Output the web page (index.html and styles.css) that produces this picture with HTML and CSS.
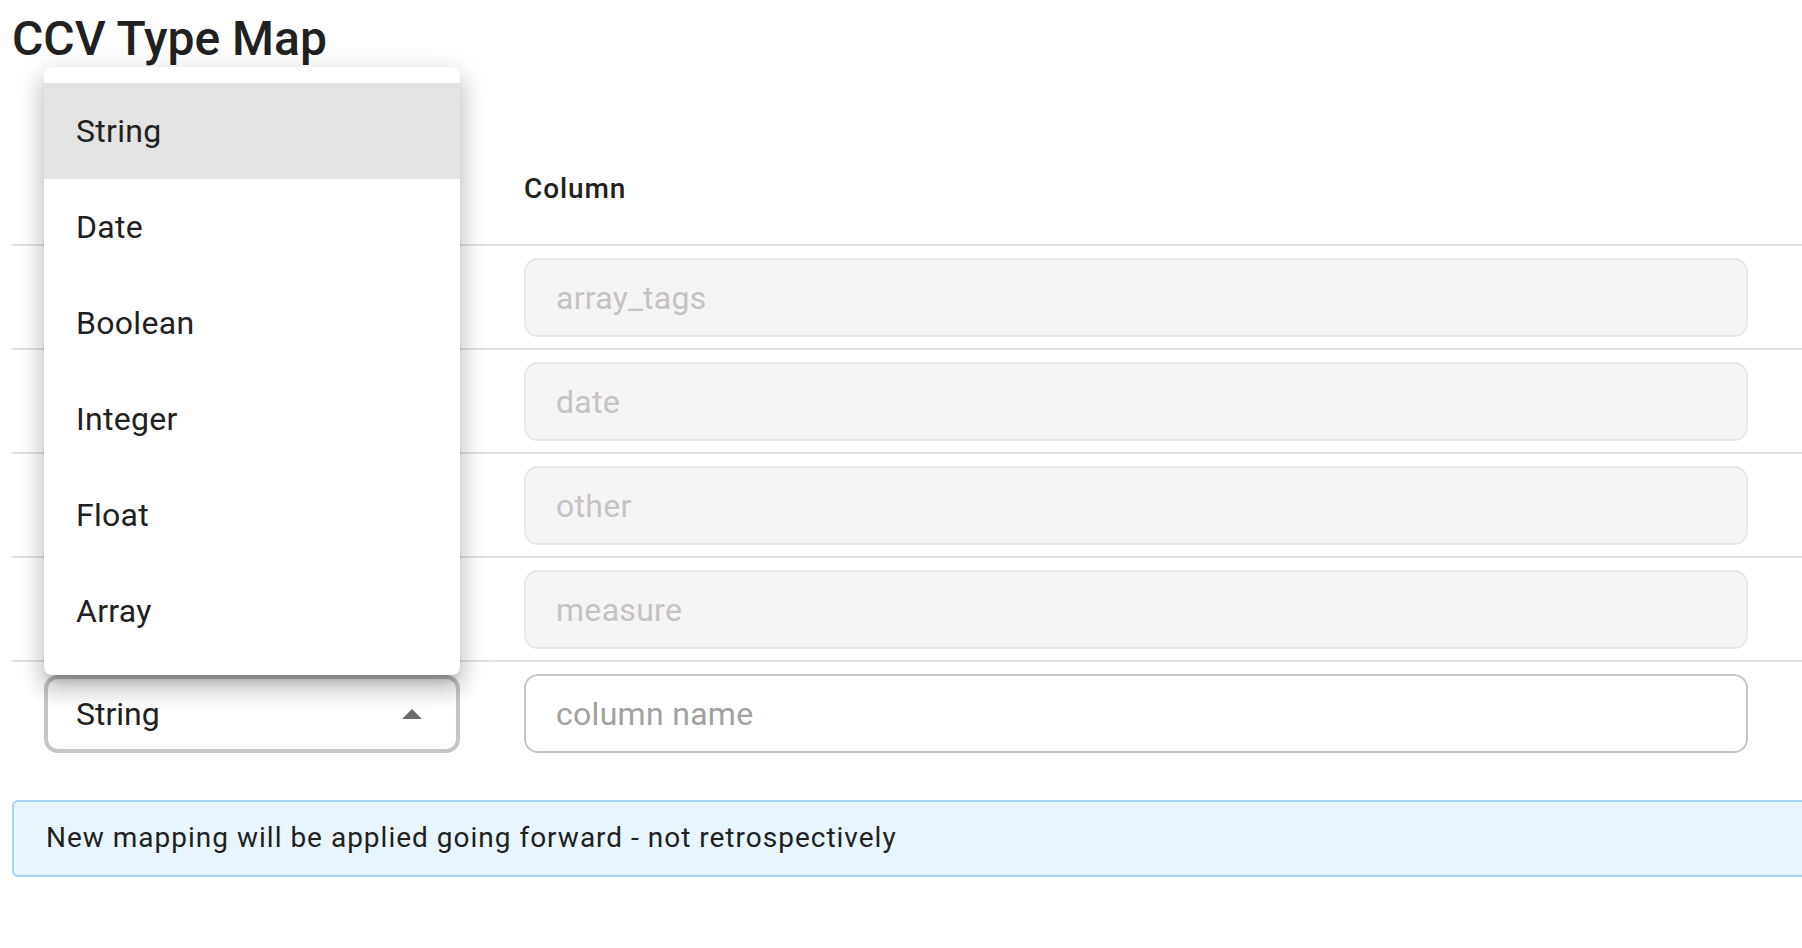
FILE: index.html
```html
<!DOCTYPE html>
<html lang="en">
<head>
<meta charset="utf-8">
<title>CCV Type Map</title>
<link rel="stylesheet" href="styles.css">
</head>
<body>
<div class="page">
  <h1 class="title">CCV Type Map</h1>
  <table class="map-table">
    <colgroup>
      <col class="col-type">
      <col class="col-column">
      <col class="col-actions">
    </colgroup>
    <thead>
      <tr>
        <th></th>
        <th>Column</th>
        <th></th>
      </tr>
    </thead>
    <tbody>
      <tr>
        <td><div class="select select-disabled"></div></td>
        <td><input class="field" type="text" placeholder="array_tags" disabled></td>
        <td></td>
      </tr>
      <tr>
        <td><div class="select select-disabled"></div></td>
        <td><input class="field" type="text" placeholder="date" disabled></td>
        <td></td>
      </tr>
      <tr>
        <td><div class="select select-disabled"></div></td>
        <td><input class="field" type="text" placeholder="other" disabled></td>
        <td></td>
      </tr>
      <tr>
        <td><div class="select select-disabled"></div></td>
        <td><input class="field" type="text" placeholder="measure" disabled></td>
        <td></td>
      </tr>
      <tr class="last-row">
        <td>
          <div class="select select-open">
            <span>String</span>
            <svg class="arrow" width="20" height="10" viewBox="0 0 20 10" aria-hidden="true"><polygon points="0,10 10,0 20,10" fill="#6b6b6b"/></svg>
          </div>
        </td>
        <td><input class="field field-active" type="text" placeholder="column name"></td>
        <td></td>
      </tr>
    </tbody>
  </table>
  <div class="alert">New mapping will be applied going forward - not retrospectively</div>

  <ul class="menu">
    <li class="menu-item selected">String</li>
    <li class="menu-item">Date</li>
    <li class="menu-item">Boolean</li>
    <li class="menu-item">Integer</li>
    <li class="menu-item">Float</li>
    <li class="menu-item">Array</li>
  </ul>
</div>
</body>
</html>
```

FILE: styles.css
```css
html, body {
  margin: 0;
  padding: 0;
  background: #ffffff;
  overflow: hidden;
}

body {
  font-family: Roboto, "Liberation Sans", Arial, sans-serif;
  color: #212121;
}

.page {
  position: relative;
  width: 1880px;
  padding: 7px 12px 0;
  box-sizing: border-box;
}

.title {
  margin: 0;
  font-size: 48px;
  line-height: 64px;
  font-weight: 500;
  color: #212121;
}

.map-table {
  margin-top: 62px;
  width: 100%;
  border-collapse: collapse;
  table-layout: fixed;
}

.col-type { width: 480px; }
.col-column { width: 1288px; }

.map-table th {
  padding: 32px 32px 31px;
  font-size: 28px;
  line-height: 48px;
  font-weight: 500;
  letter-spacing: 0.9px;
  text-align: left;
  color: #212121;
  border-bottom: 2px solid #e2e2e2;
}

.map-table td {
  padding: 12px 32px 11px;
  border-bottom: 2px solid #e2e2e2;
  vertical-align: middle;
}

.map-table tr.last-row td {
  border-bottom: none;
}

.field {
  display: block;
  width: 100%;
  height: 79px;
  box-sizing: border-box;
  margin: 0;
  padding: 0 28px 0 30px;
  font-family: Roboto, "Liberation Sans", Arial, sans-serif;
  font-size: 32px;
  letter-spacing: 0.3px;
  color: #212121;
  background: #f5f5f5;
  border: 2px solid #e8e8e8;
  border-radius: 14px;
  outline: none;
}

.field::placeholder {
  color: #c6c2c2;
  opacity: 1;
}

.field-active {
  background: #ffffff;
  border-color: #cbc7c7;
}

.field-active::placeholder {
  color: #a3a0a0;
}

.select {
  display: flex;
  align-items: center;
  justify-content: space-between;
  height: 78px;
  box-sizing: border-box;
  padding: 0 34px 0 28px;
  font-size: 32px;
  color: #212121;
  border-radius: 14px;
}

.select-disabled {
  background: #f5f5f5;
  border: 2px solid #e8e8e8;
}

.select-open {
  background: #ffffff;
  border: 4px solid #c9c5c5;
}

.arrow {
  display: block;
  flex: none;
}

.alert {
  margin-top: 36px;
  padding: 16px 32px 17px;
  font-size: 28px;
  line-height: 40px;
  letter-spacing: 1px;
  color: #212121;
  background: #e8f5fd;
  border: 2px solid #a4d4f7;
  border-radius: 6px;
}

.menu {
  position: absolute;
  top: 67px;
  left: 44px;
  width: 416px;
  margin: 0;
  padding: 16px 0;
  list-style: none;
  background: #ffffff;
  border-radius: 8px;
  box-shadow: 0 10px 10px -6px rgba(0, 0, 0, 0.2),
              0 16px 20px 2px rgba(0, 0, 0, 0.14),
              0 6px 28px 4px rgba(0, 0, 0, 0.12);
}

.menu-item {
  display: flex;
  align-items: center;
  height: 96px;
  padding: 0 32px;
  font-size: 32px;
  letter-spacing: 0.3px;
  color: #212121;
}

.menu-item.selected {
  background: #e3e3e3;
}
```
